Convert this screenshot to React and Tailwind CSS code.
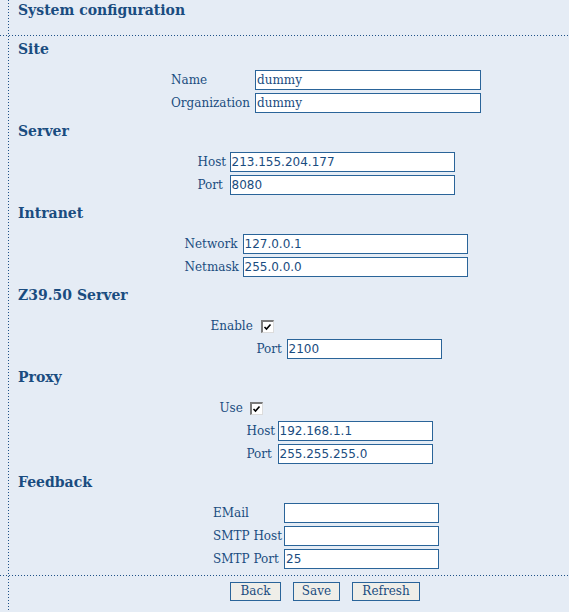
import React from "react";

function Heading({ children, first }) {
  return (
    <h2
      className={
        first
          ? "mt-[4px] mb-[12px] h-[18px] pl-[18px] text-[14px] font-bold leading-[18px]"
          : "mt-[9px] mb-[12px] h-[18px] pl-[18px] text-[14px] font-bold leading-[18px]"
      }
    >
      {children}
    </h2>
  );
}

function Label({ children }) {
  return <div className="flex h-[20px] items-center whitespace-nowrap text-[12px]">{children}</div>;
}

function Field({ value = "", width = "w-[155px]", sans }) {
  return (
    <input
      readOnly
      defaultValue={value}
      className={[
        "h-[20px] border border-[#2a6499] bg-white px-px text-[12px] text-[#1a4c80] outline-none",
        width,
        sans ? "font-['DejaVu_Sans',sans-serif]" : "font-['DejaVu_Serif',serif]",
      ].join(" ")}
    />
  );
}

function Check() {
  return (
    <div className="h-[13px] w-[13px] border-t-2 border-l-2 border-r border-b border-t-[#7a7a7a] border-l-[#7a7a7a] border-r-[#dcdcdc] border-b-[#dcdcdc] bg-white">
      <svg width="10" height="10" viewBox="0 0 10 10" className="block">
        <polyline points="1.5,5 3.5,7 7.5,2.5" fill="none" stroke="#000" strokeWidth="1.6" />
      </svg>
    </div>
  );
}

function Dotted() {
  return <div className="h-px w-full bg-[linear-gradient(to_right,#1f5288_1px,transparent_1px)] bg-[length:3px_1px]" />;
}

export default function App() {
  return (
    <div className="min-h-screen bg-[#e5ecf5] bg-[linear-gradient(to_bottom,#1f5288_1px,transparent_1px)] bg-[length:1px_3px] bg-[position:8px_0] bg-repeat-y font-['DejaVu_Serif',serif] text-[#1a4c80]">
      {/* Title */}
      <div className="h-[35px] pt-[1px]">
        <h1 className="h-[18px] pl-[18px] text-[14px] font-bold leading-[18px]">System configuration</h1>
      </div>
      <Dotted />

      {/* Site */}
      <Heading first>Site</Heading>
      <div className="flex justify-center pl-[83px]">
        <div className="grid grid-cols-[84px_226px] gap-y-[3px]">
          <Label>Name</Label>
          <Field value="dummy" width="w-[226px]" />
          <Label>Organization</Label>
          <Field value="dummy" width="w-[226px]" />
        </div>
      </div>

      {/* Server */}
      <Heading>Server</Heading>
      <div className="flex justify-center pl-[83px]">
        <div className="grid grid-cols-[32px_225px] gap-y-[3px]">
          <Label>Host</Label>
          <Field value="213.155.204.177" width="w-[225px]" sans />
          <Label>Port</Label>
          <Field value="8080" width="w-[225px]" sans />
        </div>
      </div>

      {/* Intranet */}
      <Heading>Intranet</Heading>
      <div className="flex justify-center pl-[83px]">
        <div className="grid grid-cols-[58px_225px] gap-y-[3px]">
          <Label>Network</Label>
          <Field value="127.0.0.1" width="w-[225px]" sans />
          <Label>Netmask</Label>
          <Field value="255.0.0.0" width="w-[225px]" sans />
        </div>
      </div>

      {/* Z39.50 */}
      <Heading>Z39.50 Server</Heading>
      <div className="flex justify-center pl-[83px]">
        <div className="grid grid-cols-[46px_185px] gap-y-[3px]">
          <Label>Enable</Label>
          <div className="flex h-[20px] items-center pl-[4px]">
            <Check />
          </div>
          <div />
          <div className="flex">
            <div className="w-[30px]">
              <Label>Port</Label>
            </div>
            <Field value="2100" sans />
          </div>
        </div>
      </div>

      {/* Proxy */}
      <Heading>Proxy</Heading>
      <div className="flex justify-center pl-[83px]">
        <div className="grid grid-cols-[27px_186px] gap-y-[3px]">
          <Label>Use</Label>
          <div className="flex h-[20px] items-center pl-[3px]">
            <Check />
          </div>
          <div />
          <div className="flex flex-col gap-y-[3px]">
            <div className="flex">
              <div className="w-[31px]">
                <Label>Host</Label>
              </div>
              <Field value="192.168.1.1" sans />
            </div>
            <div className="flex">
              <div className="w-[31px]">
                <Label>Port</Label>
              </div>
              <Field value="255.255.255.0" sans />
            </div>
          </div>
        </div>
      </div>

      {/* Feedback */}
      <Heading>Feedback</Heading>
      <div className="flex justify-center pl-[83px]">
        <div className="grid grid-cols-[71px_155px] gap-y-[3px]">
          <Label>EMail</Label>
          <Field />
          <Label>SMTP Host</Label>
          <Field />
          <Label>SMTP Port</Label>
          <Field value="25" sans />
        </div>
      </div>

      <div className="mt-[6px]">
        <Dotted />
      </div>

      {/* Buttons */}
      <div className="mt-[6px] flex justify-center gap-[12px] pl-[81px]">
        <button className="h-[19px] w-[51px] border border-[#2a6499] bg-[#efeee8] text-[12px] leading-[17px] text-[#1a4c80]">Back</button>
        <button className="h-[19px] w-[47px] border border-[#2a6499] bg-[#efeee8] text-[12px] leading-[17px] text-[#1a4c80]">Save</button>
        <button className="h-[19px] w-[68px] border border-[#2a6499] bg-[#efeee8] text-[12px] leading-[17px] text-[#1a4c80]">Refresh</button>
      </div>
    </div>
  );
}
